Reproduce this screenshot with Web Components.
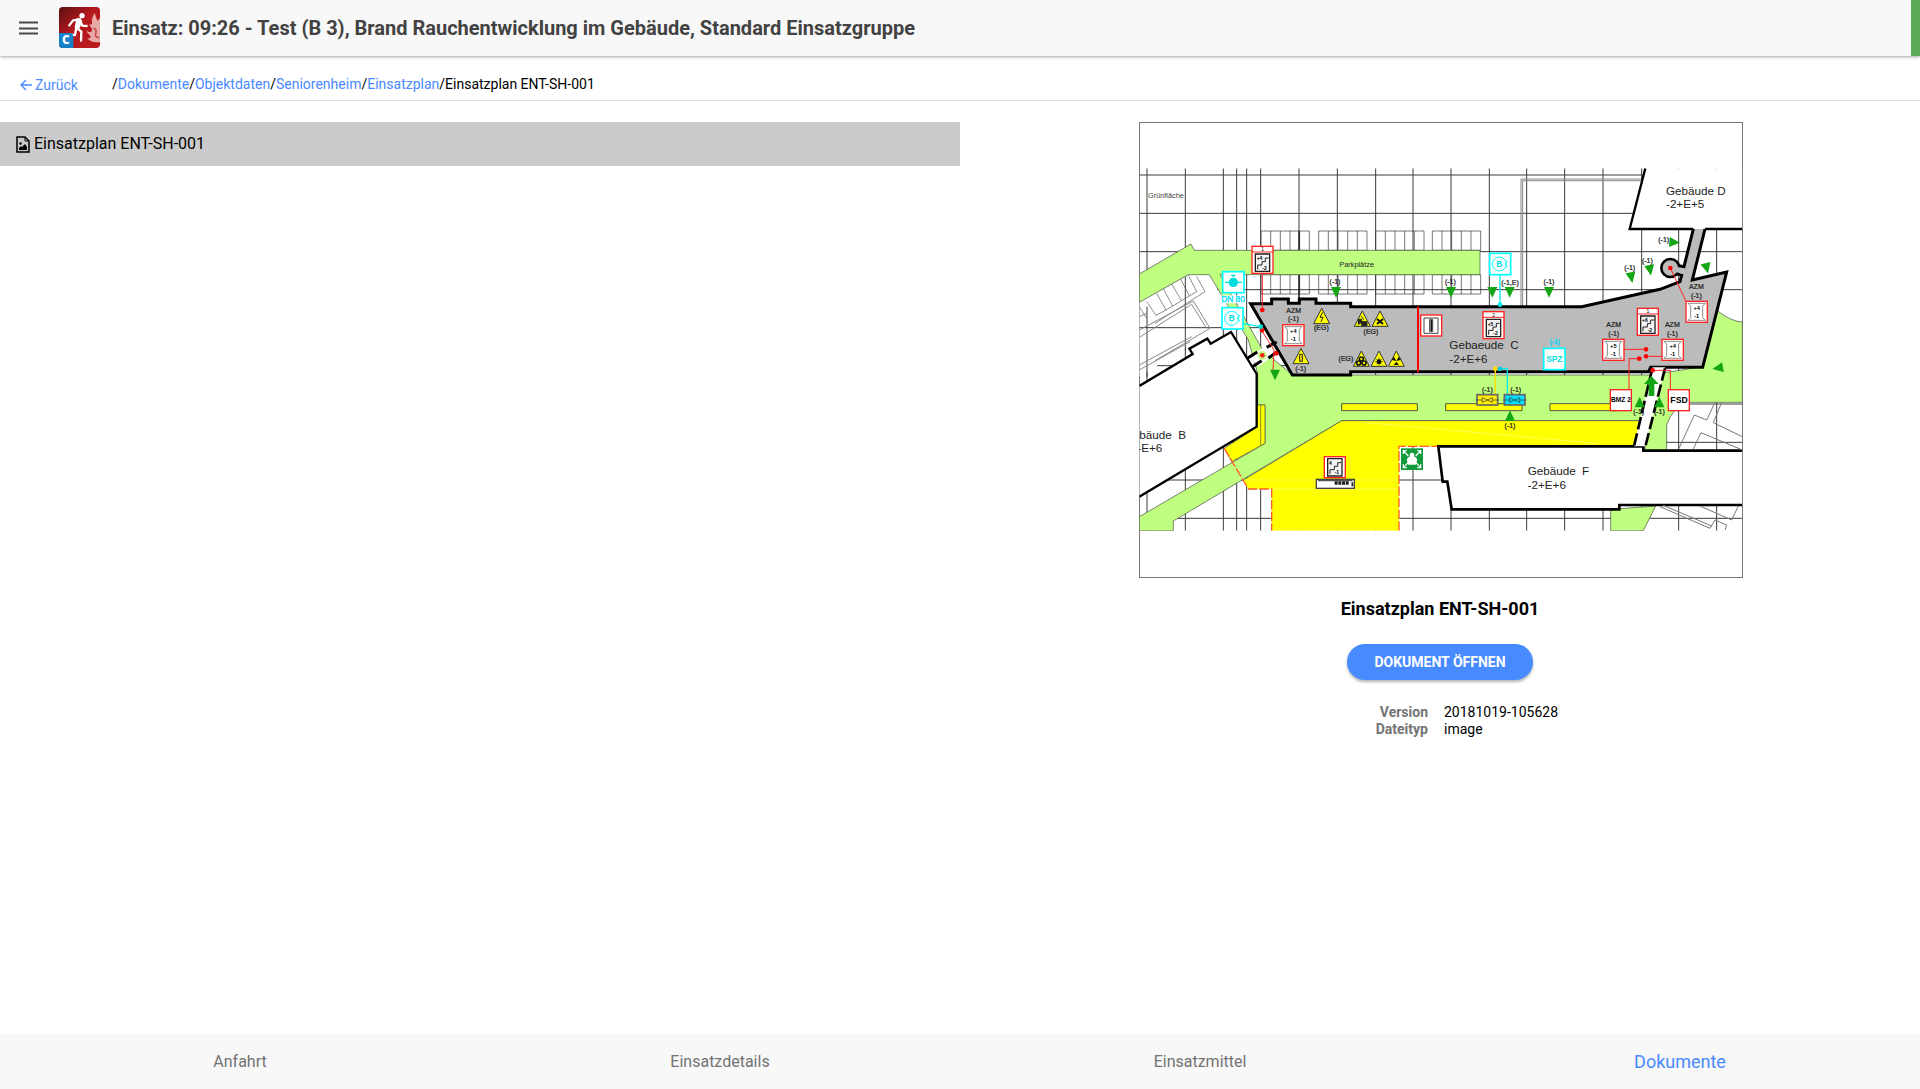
<!DOCTYPE html>
<html lang="de">
<head>
<meta charset="utf-8">
<title>Einsatz – Dokumente</title>
<style>
  html, body { height: 100%; margin: 0; }
  body { background: #fff; color: #000; font: 14px/20px Roboto, "Liberation Sans", sans-serif; }
</style>
</head>
<body>
<einsatz-app></einsatz-app>
<script>
const define = (name, html) => {
  const tpl = document.createElement('template');
  tpl.innerHTML = html;
  customElements.define(name, class extends HTMLElement {
    constructor() {
      super();
      this.attachShadow({ mode: 'open' }).append(tpl.content.cloneNode(true));
    }
  });
};

define('app-header', `
<style>
  :host { display: flex; align-items: stretch; background: #f8f8f8; flex: none;
    box-shadow: 0 1px 3px rgba(0,0,0,.35); position: relative; z-index: 1; }
  .bar { flex: 1; display: flex; align-items: center; height: 55px; padding-bottom: 1px; }
  button { border: 0; background: none; padding: 0; margin-left: 18px; width: 20px; height: 20px; display: flex; }
  .logo { width: 41px; height: 41px; margin: 0 12px 0 21px; flex: none; }
  h1 { margin: 0; flex: 1; font-size: 20px; line-height: 24px; font-weight: 700; color: #424242; }
  .state { width: 9px; background: #5aac58; }
</style>
<div class="bar">
<button aria-label="Menü"><svg width="20" height="20" viewBox="0 0 20 20"><path d="M1 4h19M1 10h19M1 15h19" transform="translate(0 .5)" stroke="#4a4a4a" stroke-width="2"/></svg></button>
<svg class="logo" viewBox="0 0 123 123" role="img" aria-label="Logo">
  <defs><linearGradient id="g" x1="0" y1="0" x2="1" y2="1"><stop offset="0" stop-color="#5c1012"/><stop offset=".45" stop-color="#b3181c"/><stop offset="1" stop-color="#bd1c20"/></linearGradient>
  <clipPath id="c"><rect width="123" height="123" rx="11"/></clipPath></defs>
  <g clip-path="url(#c)">
    <rect width="123" height="123" fill="url(#g)"/>
    <path d="M123 34C117 40 115 45 113 36C111 28 108 24 108 17C101 27 97 36 99 48C100 54 93 54 89 50C96 62 102 64 98 73C94 78 88 74 83 72C86 82 96 84 95 91C93 96 88 94 85 94C93 104 106 108 123 105Z" fill="#e9a9a7"/>
    <path d="M103 63Q115 67 110 80Q106 91 121 92" fill="none" stroke="#c9484a" stroke-width="5"/>
    <circle cx="69" cy="26" r="8" fill="#fff"/>
    <path d="M61 37L51 61L67 74L66 101M52 62L48 84H33M61 38L42 40L31 55M62 38L70 56L83 57" fill="none" stroke="#fff" stroke-width="7" stroke-linejoin="round" stroke-linecap="round"/>
    <path d="M52 34L65 34L70 44L61 65L47 62Z" fill="#fff"/>
    <path d="M0 78H31Q43 78 43 90V123H0Z" fill="#1680c8"/>
    <text x="9" y="112" fill="#fff" font-family="Open Sans, sans-serif" font-weight="800" font-size="35">C</text>
  </g>
</svg>
<h1><slot></slot></h1></div><div class="state"></div>`);

define('path-bar', `
<style>
  :host { display: flex; align-items: center; height: 44px; padding-left: 20px; border-bottom: 1px solid #dedede; flex: none; }
  a { color: #488aff; text-decoration: none; }
  .back { display: flex; align-items: center; gap: 3px; width: 92px; padding-top: 14px; }
  nav { padding-top: 12px; white-space: nowrap; }
  svg { width: 12px; height: 12px; }
</style>
<a class="back" href="#zurueck"><svg viewBox="0 0 12 12"><path d="M12 6H1M6 1L1 6L6 11" fill="none" stroke="#488aff" stroke-width="1.4"/></svg>Zurück</a>
<nav aria-label="Pfad">/<a href="#dokumente">Dokumente</a>/<a href="#objektdaten">Objektdaten</a>/<a href="#seniorenheim">Seniorenheim</a>/<a href="#einsatzplan">Einsatzplan</a>/<span>Einsatzplan ENT-SH-001</span></nav>`);

define('file-item', `
<style>
  :host { display: block; }
  a { display: flex; align-items: center; gap: 4px; height: 44px; padding-left: 16px; background: #cbcbcb; color: #000; text-decoration: none; font-size: 16px; }
  svg { width: 14px; height: 17px; }
</style>
<a href="#datei"><svg viewBox="0 0 14 17"><path d="M1 1H9L13 5V16H1Z" fill="none" stroke="#000" stroke-width="1.5"/><path d="M9 1V5H13" fill="none" stroke="#000"/><path d="M3 14V12L5 10L6 11L9 8L11 11V14Z"/><circle cx="4.500" cy="7.500" r="1.200"/></svg><slot></slot></a>`);

/* Site plan: everything below is drawn in plan units, three per CSS pixel. */
const poly = (pts, fill, stroke = 'none', w = 2, extra = '') =>
  `<path d="M${pts}" fill="${fill}" stroke="${stroke}" stroke-width="${w}" ${extra}/>`;
const t = (x, y, s, size = 20, fill = '#222', extra = '') =>
  `<text x="${x}" y="${y}" font-size="${size}" fill="${fill}" ${extra}>${s}</text>`;
const mid = 'text-anchor="middle"';
const inked = mid + ' stroke="#222" stroke-width=".7"';
const dot = (x, y, c) => `<circle cx="${x}" cy="${y}" r="7" fill="${c}"/>`;
const tri = (x, y, a = 0) => `<path d="M-15-15H15L0 17Z" transform="translate(${x} ${y}) rotate(${a})" fill="#14a514"/>`;
const slots = y => [393, 566, 737, 907].map(x =>
  `<path d="M${x} ${y}h145v58h-145zm29 0v58m29-58v58m29-58v58m29-58v58" fill="none" stroke="#333" stroke-width="2"/>`).join('');
const stairs = (x, y, top, label, a, b) => `<g transform="translate(${x} ${y})">
  <rect x="0" y="${top ? -17 : 0}" width="63" height="${top ? 81 : 63}" fill="#fff" stroke="#f22" stroke-width="4"/>
  ${top ? '<path d="M0 0H63" stroke="#f22" stroke-width="3"/>' + t(32, -2, label, 15, '#000', mid) : ''}
  <path d="M10 6H53V58H10Z" fill="#f4f4f4" stroke="#222" stroke-width="4"/>
  <path d="M17 52V39H30V29H40V18H50" fill="none" stroke="#222" stroke-width="3"/>
  ${t(14, 25, a, 15, '#000', 'font-weight="bold"')}${t(31, 53, b, 15, '#000', 'font-weight="bold"')}</g>`;
const lift = (x, y, a, b) => `<g transform="translate(${x} ${y})">
  <rect width="64" height="63" fill="#fff" stroke="#f22" stroke-width="4"/>
  <path d="M6 6H58L50 14V49L58 57H6L14 49V14Z" fill="none" stroke="#555" stroke-width="2"/>
  ${t(32, 25, a, 17, '#000', mid + ' font-weight="bold"')}${t(32, 50, b, 17, '#000', mid + ' font-weight="bold"')}</g>`;
const warn = (x, y, inner) => `<g transform="translate(${x} ${y})"><path d="M0-24L24 22H-24Z" fill="#ff0" stroke="#333" stroke-width="3" stroke-linejoin="round"/>${inner}</g>`;
const hydrant = (x, y) => `<g transform="translate(${x} ${y})" stroke="#0ff" fill="none" stroke-width="5"><rect width="63" height="64" fill="#fff"/><circle cx="29" cy="32" r="21" stroke-width="3"/><path d="M54 22L46 32L54 42" stroke-width="3"/><text x="29" y="41" text-anchor="middle" font-size="25" font-weight="bold" fill="#0dd" stroke="none">B</text></g>`;
const valve = (x, y, c) => `<g transform="translate(${x} ${y})"><rect width="62" height="31" fill="${c}" stroke="#666" stroke-width="5"/><path d="M-4 16H16M46 16H66M16 9L31 16L16 23ZM46 9L31 16L46 23Z" fill="none" stroke="#333" stroke-width="2"/></g>`;

const plan = `
<g clip-path="url(#sheet)">
  <path d="${[51,166,280,320,350,392,507,622,737,849,963,1078,1190,1304,1419,1535,1646,1760].map(x => `M${x} 175V1262`).join('')}${[195,310,425,539,653,767,882,997,1110,1225].map(y => `M28 ${y}H1837`).join('')}" stroke="#3a3a3a" stroke-width="3"/>
  <path d="M1173 590V207H1540M1178 590V212H1540" fill="none" stroke="#888" stroke-width="3"/>
  ${slots(363)}${slots(494)}
  <path d="M507 363V590M507 494V552" stroke="#222" stroke-width="4"/>
  ${poly('28 577L175 494H238L316 640L205 690L28 800Z', '#fff')}
  <path d="M51 590V800M166 500V720M28 653H330" stroke="#3a3a3a" stroke-width="3"/>
  <path d="M28 620L50 610M50 575L78 616L108 600L80 550M108 600L128 588L100 536M128 588L155 572L125 522M155 572L178 558L152 507M178 558L200 545L175 496M28 590L50 625M200 500L225 545L75 640" fill="none" stroke="#555" stroke-width="2"/>
  <path d="M28 660L190 573L240 655L75 752M28 682L185 583L230 655M28 765L185 680M28 780L180 695" fill="none" stroke="#888" stroke-width="3"/>
  ${poly('28 492L183 402L193 421H1050V494H270L398 720L487 795H1560L1718 770L1760 600Q1800 634 1837 636V877H1665Q1625 900 1610 945V1022H1545V932H635L130 1233V1262H28V1220L405 1000V885H383V790L355 690L238 494H175L28 577Z', '#bfff7f', '#444', 2)}
  ${poly('1442 1198V1262H1540L1577 1188Z', '#bfff7f', '#444', 2)}
  ${poly('380 885H405V1000L305 1055L283 1015L380 952Z', '#ff0', '#553', 2)}<path d="M392 885V1005" stroke="#553" stroke-width="2"/>
  ${poly('635 932H1530L1512 1009H807V1262H425V1137H355L340 1110Z', '#ff0')}
  <path d="M340 1110L635 932H1530" fill="none" stroke="#444" stroke-width="2"/>
  <path d="M340 1110H807M425 1137H807M700 937L1400 1000" stroke="#ffff80" stroke-width="2"/>
  <path d="M283 1015L355 1137H425V1262M807 1262V1009H925" fill="none" stroke="#ff5a20" stroke-width="4" stroke-dasharray="28 7"/>
  <path d="M635 881H862V902H635ZM947 881H1176V902H947ZM1260 881H1460V902H1260Z" fill="#ff0" stroke="#554" stroke-width="3"/>
  ${poly('28 828L188 732L178 716L232 686L242 701L303 666L380 792V950L28 1160', '#fff', '#000', 7)}
  ${poly('1837 1022H1540V1009H925L938 1115H952L965 1198H1468V1185H1837', '#fff', '#000', 8)}
  ${poly('1545 175L1498 357H1837V175Z', '#fff')}
  <path d="M1546 175L1499 357H1690M1725 357H1837" fill="none" stroke="#000" stroke-width="7"/>
  ${poly('362 580H425V565H475V580H508V565H558V580H662V590H1355L1590 538L1650 515L1690 357H1725L1687 510L1790 485L1718 770H1562L1558 785H662V795H487Z', '#bbb')}
  <path d="M1690 357L1662 470L1640 466M1642 492L1655 495L1650 515L1590 538L1355 590H662V580H558V567H508V580H475V567H425V581H362L487 795H662V785H1556L1562 772H1718L1790 486L1687 510L1725 357" fill="none" stroke="#000" stroke-width="9"/>
  <circle cx="1621" cy="474" r="27" fill="#bbb" stroke="#000" stroke-width="8"/>
  <path d="M1640 470L1665 476V494L1640 487Z" fill="#bbb"/>
  ${poly('1568 772H1605L1545 1009H1512Z', '#fff')}
  <path d="M1567 775L1512 1009M1605 775L1544 1018" fill="none" stroke="#000" stroke-width="8" stroke-dasharray="38 12"/>
  ${poly('360 740L418 700L440 728L385 770Z', '#fff')}
  <path d="M352 745L382 726M410 712L440 696M365 772L395 752M415 744L440 727" stroke="#000" stroke-width="9"/>
  <circle cx="397" cy="736" r="13" fill="#bfff7f"/>${dot(397, 736, '#f22')}${dot(439, 730, '#f00')}
  <path d="M864 590V787" stroke="#f00" stroke-width="6"/>
  <path d="M397 490V600M398 666L432 720L429 780M1621 474L1668 574M1480 718H1550M1595 739H1548M1497 838V746H1530M1568 781H1621V838" fill="none" stroke="#f22" stroke-width="3"/>
  <path d="M1646 1017L1693 915L1730 930L1755 877M1690 1017L1713 968L1837 1020M1837 980L1750 938L1775 877M1590 1190L1740 1255L1755 1230L1790 1245L1785 1260M1600 1186L1745 1248M1710 1188L1805 1230L1825 1188" fill="none" stroke="#777" stroke-width="3"/>
  <path d="M335 640L392 650M1110 494V585M1110 776H1132V855" fill="none" stroke="#0ee" stroke-width="4"/>
  <path d="M1096 776V855" stroke="#fd0" stroke-width="4"/>
  ${dot(397,600,'#f00')}${dot(396,661,'#f00')}${dot(1621,474,'#f00')}${dot(1548,718,'#f00')}${dot(1548,739,'#f00')}${dot(1528,746,'#f00')}${dot(1568,781,'#f00')}
  ${dot(392,650,'#0dd')}${dot(1110,584,'#0ee')}${dot(1110,777,'#0cd')}${dot(1096,776,'#fd0')}
  ${stairs(366,426,true,'1','+4','-2')}${stairs(1059,622,true,'2','+5','-2')}${stairs(1522,612,true,'1','+6','-2')}${stairs(583,1040,false,'','4','-1')}
  ${lift(458,644,'+4','-1')}${lift(1668,574,'+4','-1')}${lift(1418,688,'+5','-1')}${lift(1596,688,'+4','-1')}
  <rect x="872" y="615" width="63" height="63" fill="#fff" stroke="#f22" stroke-width="4"/><path d="M882 624H924V670H882ZM899 628H908V665H899Z" fill="none" stroke="#444" stroke-width="3"/><path d="M904 630V664" stroke="#111" stroke-width="5"/>
  <rect x="1441" y="839" width="63" height="63" fill="#fff" stroke="#f22" stroke-width="4"/>${t(1473,877,'BMZ 2',20,'#000',mid+' font-weight="bold"')}
  <rect x="1615" y="839" width="63" height="63" fill="#fff" stroke="#f22" stroke-width="4"/>${t(1647,879,'FSD',26,'#000',mid+' font-weight="bold"')}
  <rect x="278" y="485" width="64" height="63" fill="#fff" stroke="#0ff" stroke-width="5"/><path d="M285 517H336M310 502V494M303 496H317" stroke="#0dd" stroke-width="4"/><circle cx="310" cy="517" r="14" fill="#0dd"/>
  <rect x="272" y="556" width="76" height="24" fill="#fff"/>
  ${hydrant(276,593)}${hydrant(1079,430)}
  <rect x="1241" y="715" width="64" height="64" fill="#fff" stroke="#0ff" stroke-width="5"/>${t(1273,755,'SPZ',25,'#0dd',mid+' font-weight="bold"')}
  ${t(309,577,'DN 80',25,'#0df',mid+' stroke="#0df" stroke-width="1"')}${t(1274,702,'(-1)',20,'#0df',mid+' stroke="#0df" stroke-width="1"')}
  ${valve(1041,854,'#fe0')}${valve(1123,854,'#0df')}
  ${warn(575,619,'<path d="M3-12L-5 3H4L-2 16" fill="none" stroke="#222" stroke-width="3"/>')}
  ${warn(697,627,'<path d="M-12 17V1H-2V8H14V20H-2V12M-3-8L4 2" fill="#222" stroke="#222" stroke-width="3"/>')}
  ${warn(750,627,'<path d="M-9 0L9 15M9 0L-9 15" stroke="#111" stroke-width="6"/>')}
  ${warn(513,739,'<path d="M-4-6H4V15H-4Z" fill="#fd0" stroke="#222" stroke-width="3"/>')}
  ${warn(694,747,'<circle cy="0" r="6" fill="#ff0" stroke="#111" stroke-width="5"/><circle cx="-8" cy="12" r="6" fill="none" stroke="#111" stroke-width="5"/><circle cx="8" cy="12" r="6" fill="none" stroke="#111" stroke-width="5"/>')}
  ${warn(747,747,'<circle cy="8" r="7" fill="#111"/><path d="M-12 8H12M0-4V19M-8 0L8 16M8 0L-8 16" stroke="#111" stroke-width="2"/>')}
  ${warn(799,747,'<path d="M0 6L-14 3L-7-7ZM0 6L14 3L7-7ZM0 8L-8 18H8Z" fill="#111"/>')}
  <rect x="813" y="1015" width="66" height="65" fill="#129b3c"/><path d="M820 1022L835 1038M872 1022L857 1038M820 1073L835 1057M872 1073L857 1057M820 1032V1022H830M872 1032V1022H862M820 1063V1073H830M872 1063V1073H862" fill="none" stroke="#fff" stroke-width="4"/><circle cx="846" cy="1035" r="7" fill="#fff"/><path d="M830 1050Q834 1038 846 1038Q858 1038 862 1050L857 1064H835Z" fill="#fff"/>
  <rect x="559" y="1108" width="114" height="27" fill="#fff" stroke="#444" stroke-width="4"/><path d="M564 1110H668V1114H564Z" fill="#555"/><path d="M614 1119H656" stroke="#222" stroke-width="11" stroke-dasharray="9 2"/><path d="M667 1117V1129" stroke="#222" stroke-width="5"/>
  ${tri(618,546)}${tri(963,546)}${tri(1087,546)}${tri(1139,546)}${tri(1257,546)}${tri(435,794)}
  ${tri(1504,502,-10)}${tri(1560,480,-10)}${tri(1633,397,-85)}${tri(1730,474,-15)}${tri(1764,774,80)}
  ${tri(1140,918,180)}${tri(1529,877,180)}${tri(1588,877,180)}
  <path d="M1564 798L1586 822H1573V858H1556V822H1542Z" fill="#14a514"/>
  ${[[615,523],[961,523],[1257,523],[1499,480],[1552,458],[1601,396],[490,634],[1699,563],[1451,677],[1627,677],[512,783],[1072,847],[1157,847],[1140,953],[1526,911],[1588,911]].map(p => t(p[0], p[1], '(-1)', 21, '#222', inked)).join('')}
  ${t(1140,524,'(-1,E)',21,'#222',inked)}
  ${[[491,608],[1699,537],[1451,651],[1627,651]].map(p => t(p[0], p[1], 'AZM', 21, '#222', inked)).join('')}
  ${[[574,661],[723,673],[648,753]].map(p => t(p[0], p[1], '(EG)', 21, '#222', inked)).join('')}
  ${t(54,265,'Grünfläche',22,'#444')}${t(628,471,'Parkplätze',22)}
  ${t(1608,255,'Gebäude D',35)}${t(1608,295,'-2+E+5',35)}
  ${t(958,717,'Gebaeude&nbsp; C',35)}${t(958,758,'-2+E+6',35)}
  ${t(28,986,'bäude&nbsp; B',35)}${t(22,1025,'-E+6',35)}
  ${t(1193,1096,'Gebäude&nbsp; F',35)}${t(1193,1136,'-2+E+6',35)}
</g>`;

define('site-plan', `
<style>
  :host { display: block; width: 100%; max-width: 606px; }
  svg { display: block; width: 100%; height: auto; font-family: "Liberation Sans", sans-serif; }
</style>
<svg viewBox="21 36 1818 1371" role="img" aria-label="Einsatzplan">
  <clipPath id="sheet"><rect x="28" y="175" width="1809" height="1087"/></clipPath>
  <rect x="28.500" y="37.500" width="1809" height="1365" fill="#fff" stroke="#777" stroke-width="3"/>
  ${plan}
</svg>`);

define('document-detail', `
<style>
  :host { display: flex; flex-direction: column; align-items: center; }
  h2 { margin: 18px 0 0; font-size: 18px; line-height: 24px; font-weight: 700; }
  button { margin-top: 23px; height: 36px; padding: 0 27px; border: 0; border-radius: 18px; background: #488aff; color: #fff;
    font: 700 14px/20px Roboto, sans-serif; text-transform: uppercase; box-shadow: 0 2px 3px rgba(0,0,0,.3); }
  dl { margin: 24px 0 0; display: grid; grid-template-columns: 1fr 1fr; column-gap: 16px; line-height: 17px; width: 100%; box-sizing: border-box; padding-right: 8px; }
  dt { text-align: right; font-weight: 700; color: #737373; }
  dd { margin: 0; }
</style>
<site-plan></site-plan>
<h2>Einsatzplan ENT-SH-001</h2>
<button>Dokument öffnen</button>
<dl><dt>Version</dt><dd>20181019-105628</dd><dt>Dateityp</dt><dd>image</dd></dl>`);

define('tab-bar', `
<style>
  :host { display: block; flex: none; background: #f8f8f8; }
  nav { display: grid; grid-template-columns: repeat(4, 1fr); height: 55px; align-items: center; text-align: center; font-size: 16px; }
  a { color: #737373; text-decoration: none; }
  a[aria-current] { color: #488aff; font-size: 18px; }
</style>
<nav aria-label="Bereiche"><a href="#anfahrt">Anfahrt</a><a href="#details">Einsatzdetails</a><a href="#mittel">Einsatzmittel</a><a href="#dokumente" aria-current="page">Dokumente</a></nav>`);

define('einsatz-app', `
<style>
  :host { display: flex; flex-direction: column; min-height: 100vh; }
  main { flex: 1; display: grid; grid-template-columns: 1fr 1fr; align-items: start; padding-top: 21px; }
</style>
<app-header>Einsatz: 09:26 - Test (B 3), Brand Rauchentwicklung im Gebäude, Standard Einsatzgruppe</app-header>
<path-bar></path-bar>
<main><file-item>Einsatzplan ENT-SH-001</file-item><document-detail></document-detail></main>
<tab-bar></tab-bar>`);
</script>
</body>
</html>
